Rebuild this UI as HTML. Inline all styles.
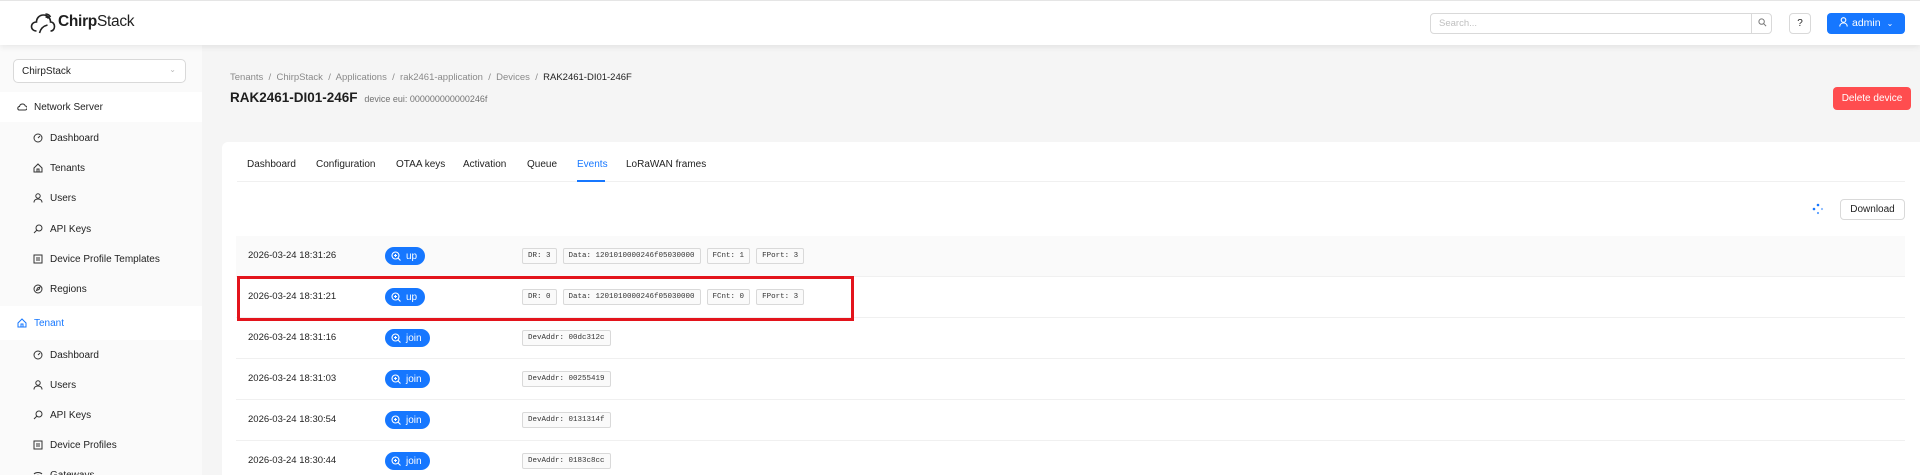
<!DOCTYPE html>
<html style="height:475px;overflow:hidden"><head><meta charset="utf-8">
<style>
*{box-sizing:border-box;margin:0;padding:0}
body{width:1920px;height:475px;overflow:hidden;background:#f5f5f5;font-family:"Liberation Sans",sans-serif;color:rgba(0,0,0,.88);font-size:10px;position:relative}
.abs{position:absolute}
.hdr{left:0;top:0;width:1920px;height:45px;background:#fff;box-shadow:0 2px 6px rgba(0,0,0,.08);z-index:2;border-top:1px solid #e5e5e5}
.side{left:0;top:45px;width:202px;height:430px;background:#fafafa}
.mi{position:absolute;left:0;width:202px;height:30px;display:flex;align-items:center;font-size:10px}
.mi svg{width:10px;height:10px;margin-right:7px}
.sub{padding-left:33px}
.top{padding-left:17px;background:#fff}
.card{left:222px;top:142px;width:1698px;height:333px;background:#fff;border-radius:6px 0 0 0}
.tab{position:absolute;top:159px;font-size:10px}
.row{position:absolute;left:236px;width:1669px;height:41px;border-bottom:1px solid #f0f0f0}
.date{position:absolute;left:12px;top:14px;font-size:9.5px}
.btn{position:absolute;left:149px;top:11px;height:18px;border-radius:9px;background:#1677ff;color:#fff;font-size:10px;display:flex;align-items:center;padding:0 8px 0 6px}
.btn svg{width:10px;height:10px;margin-right:5px}
.tags{position:absolute;left:286px;top:12px;display:flex;gap:6px}
.tg{height:16px;line-height:14px;padding:0 5px;border:1px solid #d9d9d9;background:#fafafa;border-radius:2px;font-family:"Liberation Mono",monospace;font-size:7.5px;color:#333}
</style></head><body>
<div class="abs hdr">
 <svg class="abs" style="left:30px;top:10px" width="26" height="24" viewBox="0 0 25 24" fill="none" stroke="#222" stroke-width="1.6"><path d="M6 20c-3 0-5-2-5-4.5S3 11 6 11c0-4 3-7 7-7s7 3 7 7c2.5 0 4 2 4 4.5S22.5 20 20 20"/><path d="M9 22c1-4 4-7 8-8"/><path d="M15 3c2 0 4 1 5 3M15 6c1.5 0 2.5.5 3 1.5"/></svg>
 <div class="abs" style="left:58px;top:12px;font-size:15.5px;letter-spacing:-.3px"><b>Chirp</b>Stack</div>
 <div class="abs" style="left:1430px;top:12px;width:342px;height:21px;border:1px solid #d9d9d9;border-radius:4px"><span class="abs" style="left:8px;top:4px;color:#bfbfbf;font-size:9.5px">Search...</span><div class="abs" style="left:320px;top:-1px;width:21px;height:21px;border-left:1px solid #d9d9d9"><svg class="abs" style="left:6px;top:5px" width="9" height="9" viewBox="0 0 10 10" fill="none" stroke="#777" stroke-width="1.1"><circle cx="4" cy="4" r="3"/><path d="M6.3 6.3L9 9"/></svg></div></div>
 <div class="abs" style="left:1789px;top:12px;width:22px;height:21px;border:1px solid #d9d9d9;border-radius:4px;text-align:center;line-height:19px;font-size:10px">?</div>
 <div class="abs" style="left:1827px;top:12px;width:78px;height:21px;background:#1677ff;border-radius:4px;color:#fff;font-size:10.5px;line-height:21px;padding-left:12px"><svg style="vertical-align:-1px;margin-right:4px" width="9" height="10" viewBox="0 0 9 10" fill="none" stroke="#fff" stroke-width="1.1"><circle cx="4.5" cy="3" r="2.3"/><path d="M.8 9.5c0-2.3 1.7-3.5 3.7-3.5s3.7 1.2 3.7 3.5"/></svg>admin<span style="margin-left:6px;font-size:8px">&#8964;</span></div>
</div>
<div class="abs side">
 <div class="abs" style="left:13px;top:14px;width:173px;height:24px;background:#fff;border:1px solid #d9d9d9;border-radius:5px;font-size:10px;padding:6px 8px">ChirpStack<span class="abs" style="right:9px;top:5px;color:#bbb;font-size:8px">&#8964;</span></div>
 <div class="mi top" style="top:47px"><svg viewBox="0 0 10 10" fill="none" stroke="#333"><path d="M2 8h6a2 2 0 0 0 .3-4A3 3 0 0 0 2.5 4.5 1.8 1.8 0 0 0 2 8z"/></svg>Network Server</div>
 <div class="mi sub" style="top:78px"><svg viewBox="0 0 10 10" fill="none" stroke="#333"><circle cx="5" cy="5" r="4"/><path d="M5 5l2-2"/></svg>Dashboard</div>
 <div class="mi sub" style="top:108px"><svg viewBox="0 0 10 10" fill="none" stroke="#333"><path d="M1 5l4-4 4 4v4H1z"/><path d="M4 9V6h2v3"/></svg>Tenants</div>
 <div class="mi sub" style="top:138px"><svg viewBox="0 0 10 10" fill="none" stroke="#333"><circle cx="5" cy="3" r="2.2"/><path d="M1 9.5c0-2.5 2-3.5 4-3.5s4 1 4 3.5"/></svg>Users</div>
 <div class="mi sub" style="top:169px"><svg viewBox="0 0 10 10" fill="none" stroke="#333"><circle cx="6" cy="4" r="3"/><path d="M4 6L1 9"/></svg>API Keys</div>
 <div class="mi sub" style="top:199px"><svg viewBox="0 0 10 10" fill="none" stroke="#333"><rect x="1" y="1" width="8" height="8"/><path d="M4 3v4M6 3v4"/></svg>Device Profile Templates</div>
 <div class="mi sub" style="top:229px"><svg viewBox="0 0 10 10" fill="none" stroke="#333"><circle cx="5" cy="5" r="4"/><path d="M3.5 6.5l1-2.5 2.5-1-1 2.5z"/></svg>Regions</div>
 <div class="mi top" style="top:261px;height:34px;color:#1677ff"><svg viewBox="0 0 10 10" fill="none" stroke="#1677ff"><path d="M1 5l4-4 4 4v4H1z"/><path d="M4 9V6h2v3"/></svg>Tenant</div>
 <div class="mi sub" style="top:295px"><svg viewBox="0 0 10 10" fill="none" stroke="#333"><circle cx="5" cy="5" r="4"/><path d="M5 5l2-2"/></svg>Dashboard</div>
 <div class="mi sub" style="top:325px"><svg viewBox="0 0 10 10" fill="none" stroke="#333"><circle cx="5" cy="3" r="2.2"/><path d="M1 9.5c0-2.5 2-3.5 4-3.5s4 1 4 3.5"/></svg>Users</div>
 <div class="mi sub" style="top:355px"><svg viewBox="0 0 10 10" fill="none" stroke="#333"><circle cx="6" cy="4" r="3"/><path d="M4 6L1 9"/></svg>API Keys</div>
 <div class="mi sub" style="top:385px"><svg viewBox="0 0 10 10" fill="none" stroke="#333"><rect x="1" y="1" width="8" height="8"/><path d="M4 3v4M6 3v4"/></svg>Device Profiles</div>
 <div class="mi sub" style="top:415px"><svg viewBox="0 0 10 10" fill="none" stroke="#333"><path d="M1 4c2-2 6-2 8 0M3 6c1-1 3-1 4 0"/></svg>Gateways</div>
</div>
<div class="abs" style="left:230px;top:72px;font-size:9.5px;color:rgba(0,0,0,.45)">Tenants&nbsp; /&nbsp; ChirpStack&nbsp; /&nbsp; Applications&nbsp; /&nbsp; rak2461-application&nbsp; /&nbsp; Devices&nbsp; /&nbsp; <span style="color:rgba(0,0,0,.88)">RAK2461-DI01-246F</span></div>
<div class="abs" style="left:230px;top:90px;font-size:13.5px;font-weight:bold">RAK2461-DI01-246F <span style="font-size:9px;font-weight:normal;color:rgba(0,0,0,.55);margin-left:3px">device eui: 000000000000246f</span></div>
<div class="abs" style="left:1833px;top:87px;width:78px;height:23px;background:#ff4d4f;border-radius:4px;color:#fff;font-size:10px;display:flex;align-items:center;justify-content:center">Delete device</div>
<div class="abs card"></div>
<div class="tab" style="left:247px">Dashboard</div>
<div class="tab" style="left:316px">Configuration</div>
<div class="tab" style="left:396px">OTAA keys</div>
<div class="tab" style="left:463px">Activation</div>
<div class="tab" style="left:527px">Queue</div>
<div class="tab" style="left:577px;color:#1677ff">Events</div>
<div class="tab" style="left:626px">LoRaWAN frames</div>
<div class="abs" style="left:237px;top:181px;width:1668px;height:1px;background:#f0f0f0"></div>
<div class="abs" style="left:577px;top:180px;width:28px;height:2px;background:#1677ff"></div>
<svg class="abs" style="left:1812px;top:203px" width="12" height="12" viewBox="0 0 12 12" fill="#1677ff"><circle cx="6" cy="2" r="1.3"/><circle cx="10" cy="6" r="1.1" opacity=".5"/><circle cx="6" cy="10" r="1.1" opacity=".7"/><circle cx="2" cy="6" r="1.3"/></svg>
<div class="abs" style="left:1840px;top:199px;width:65px;height:21px;border:1px solid #d9d9d9;border-radius:4px;font-size:10px;line-height:19px;text-align:center">Download</div>

<div class="row" style="top:236px;background:#fafafa"><div class="date">2026-03-24 18:31:26</div><div class="btn"><svg viewBox="0 0 10 10" fill="none" stroke="#fff" stroke-width="1.1"><circle cx="4.5" cy="4.5" r="3.5"/><path d="M7 7l2.5 2.5M4.5 3v3M3 4.5h3"/></svg>up</div><div class="tags"><span class="tg">DR: 3</span><span class="tg">Data: 1201010000246f05030000</span><span class="tg">FCnt: 1</span><span class="tg">FPort: 3</span></div></div>
<div class="row" style="top:277px"><div class="date">2026-03-24 18:31:21</div><div class="btn"><svg viewBox="0 0 10 10" fill="none" stroke="#fff" stroke-width="1.1"><circle cx="4.5" cy="4.5" r="3.5"/><path d="M7 7l2.5 2.5M4.5 3v3M3 4.5h3"/></svg>up</div><div class="tags"><span class="tg">DR: 0</span><span class="tg">Data: 1201010000246f05030000</span><span class="tg">FCnt: 0</span><span class="tg">FPort: 3</span></div></div>
<div class="row" style="top:318px"><div class="date">2026-03-24 18:31:16</div><div class="btn"><svg viewBox="0 0 10 10" fill="none" stroke="#fff" stroke-width="1.1"><circle cx="4.5" cy="4.5" r="3.5"/><path d="M7 7l2.5 2.5M4.5 3v3M3 4.5h3"/></svg>join</div><div class="tags"><span class="tg">DevAddr: 00dc312c</span></div></div>
<div class="row" style="top:359px"><div class="date">2026-03-24 18:31:03</div><div class="btn"><svg viewBox="0 0 10 10" fill="none" stroke="#fff" stroke-width="1.1"><circle cx="4.5" cy="4.5" r="3.5"/><path d="M7 7l2.5 2.5M4.5 3v3M3 4.5h3"/></svg>join</div><div class="tags"><span class="tg">DevAddr: 00255419</span></div></div>
<div class="row" style="top:400px"><div class="date">2026-03-24 18:30:54</div><div class="btn"><svg viewBox="0 0 10 10" fill="none" stroke="#fff" stroke-width="1.1"><circle cx="4.5" cy="4.5" r="3.5"/><path d="M7 7l2.5 2.5M4.5 3v3M3 4.5h3"/></svg>join</div><div class="tags"><span class="tg">DevAddr: 0131314f</span></div></div>
<div class="row" style="top:441px"><div class="date">2026-03-24 18:30:44</div><div class="btn"><svg viewBox="0 0 10 10" fill="none" stroke="#fff" stroke-width="1.1"><circle cx="4.5" cy="4.5" r="3.5"/><path d="M7 7l2.5 2.5M4.5 3v3M3 4.5h3"/></svg>join</div><div class="tags"><span class="tg">DevAddr: 0183c8cc</span></div></div>
<div class="abs" style="left:237px;top:276px;width:617px;height:45px;border:3px solid #e3141c"></div>
</body></html>
